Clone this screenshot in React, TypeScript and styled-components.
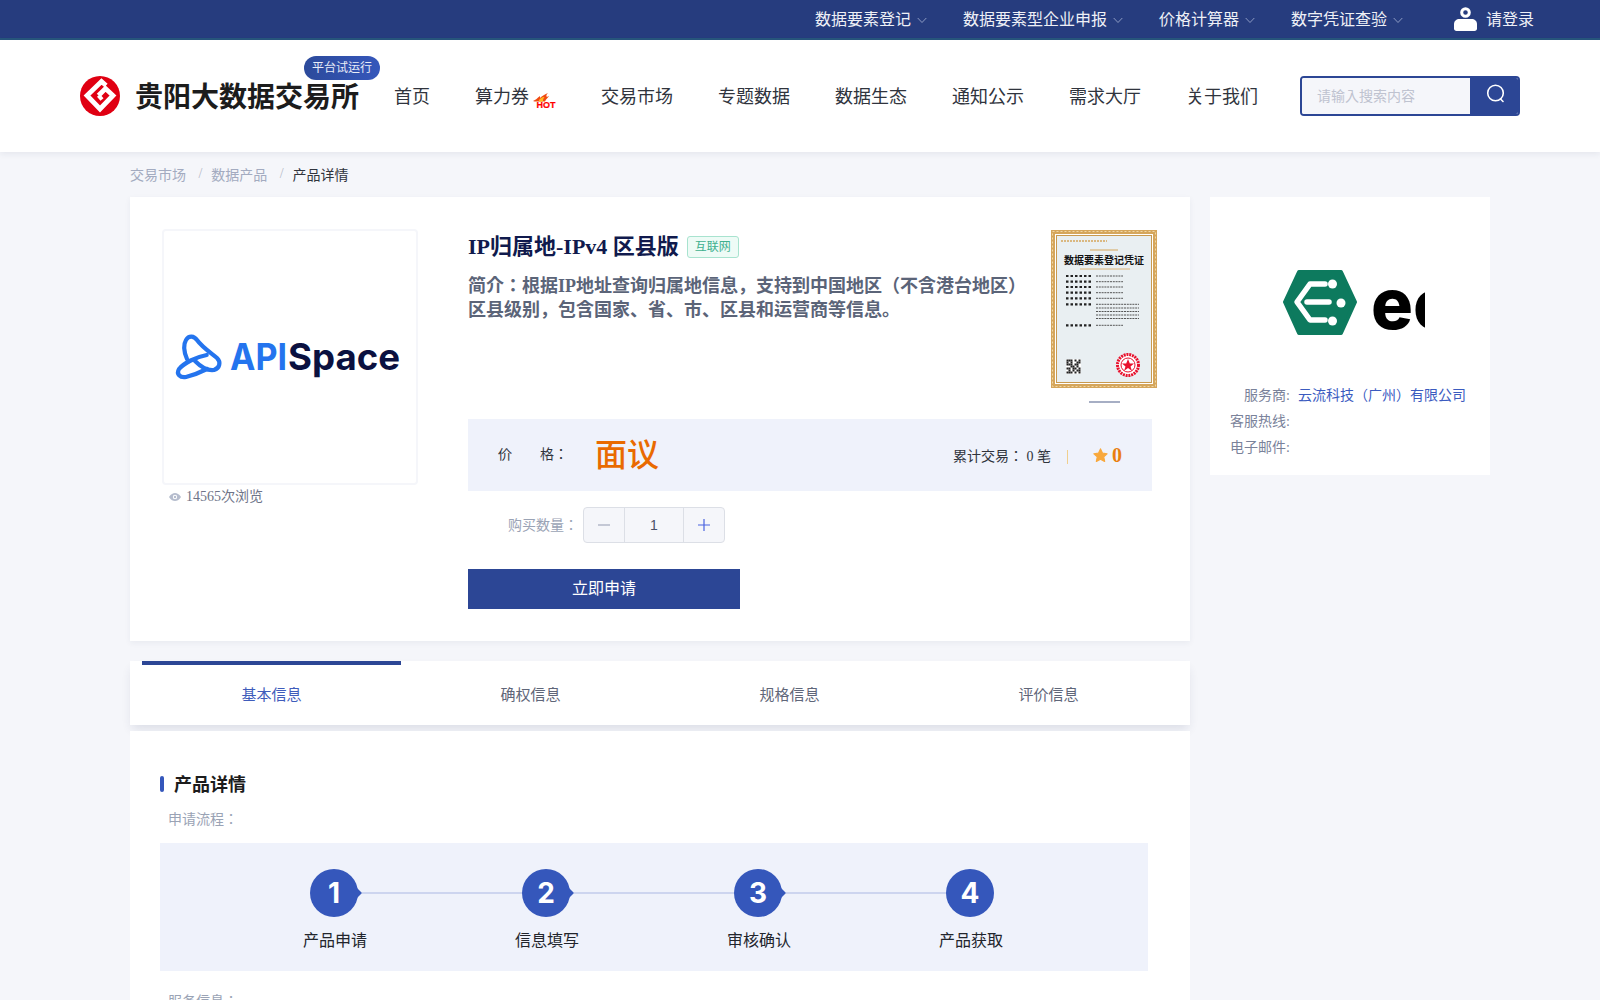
import React from "react";
import styled, { createGlobalStyle } from "styled-components";

const topLinks = ["数据要素登记", "数据要素型企业申报", "价格计算器", "数字凭证查验"];
const navLinks = ["首页", "算力券", "交易市场", "专题数据", "数据生态", "通知公示", "需求大厅", "关于我们"];
const tabs = ["基本信息", "确权信息", "规格信息", "评价信息"];
const steps = ["产品申请", "信息填写", "审核确认", "产品获取"];
const certRows = [46, 51.7, 57, 62.7, 68.3, 74.3, 95.3];
const certLines = [78, 81.5, 85, 88.5];
const qrCells = [
    "1110101", "1010011", "1110110", "0011010", "1101101", "0101011", "1110101",
];

const GlobalStyle = createGlobalStyle`
  html, body {
    margin: 0;
    padding: 0;
    background: #f5f6fa;
    font-family: "Liberation Serif", "Noto Sans CJK JP", serif;
  }
`;

function Chevron() {
    return (
        <ChevronIcon viewBox="0 0 10 7" fill="none" stroke="#8d9ac2" strokeWidth="1">
            <path d="M.7 1l4.300 4.500L9.300 1" />
        </ChevronIcon>
    );
}

function UserIcon() {
    return (
        <svg width="23" height="24" viewBox="0 0 23 24">
            <circle cx="11.5" cy="5.5" r="3.8" fill="none" stroke="#fff" strokeWidth="3" />
            <path d="M0 17c0-3 2.5-5 5.5-5h12c3 0 5.5 2 5.5 5v4.500c0 1.500-1 2.500-2.500 2.500h-18C1 24 0 23 0 21.500z" fill="#fff" />
        </svg>
    );
}

function GuiyangLogo() {
    return (
        <svg width="40" height="40" viewBox="0 0 40 40">
            <circle cx="20" cy="20" r="20" fill="#e00012" />
            <path
                d="M26 9.500L21.500 5.500L7 19.500L20 33L33 19.500L25.500 12.500L18.500 19.500"
                fill="none"
                stroke="#fff"
                strokeWidth="4.800"
                strokeLinejoin="miter"
            />
            <path d="M18.500 19.500L22 23.500" fill="none" stroke="#fff" strokeWidth="4" />
        </svg>
    );
}

function HotIcon() {
    return (
        <svg width="25" height="18" viewBox="0 0 25 18">
            <path d="M2 8C5 7 6 5 9 3C9 4 9 5 9 5C11 3 14 1 17 0C15 2 15 3 16 4C17 3 18 3 18 3C17 5 15 6 14 8.500H5C4 8.500 3 8.500 2 8Z" fill="#f04a12" />
            <path d="M8 7C10 4.500 12 4 13.500 4C12 6 12 7 12 8.500H8Z" fill="#ffb81f" />
            <HotText x="5.500" y="14.500">HOT</HotText>
        </svg>
    );
}

function SearchIcon() {
    return (
        <svg width="20" height="20" viewBox="0 0 20 20" fill="none" stroke="#fff" strokeWidth="1.600">
            <circle cx="9.500" cy="9" r="7.800" />
            <path d="M14.500 15l2.500 2.500" strokeLinecap="round" />
        </svg>
    );
}

function ApiSpaceLogo() {
    return (
        <svg width="252" height="60" viewBox="0 0 252 60">
            <g fill="none" stroke="#2474ee" strokeWidth="4.200" strokeLinecap="round">
                <path d="M23 27C20 20 19 13 22 8C25 3 30 4 33 8C38 15 47 21 53 26C57 30 56 36 50 38C43 39 36 34 31 29" />
                <path d="M42.700 23C32 25 20 31 15 37C12 42 16 46 22 45C30 43 37 40 43 37" />
            </g>
            <ApiWord x="66" y="38" textLength="57" lengthAdjust="spacingAndGlyphs">API</ApiWord>
            <SpaceWord x="124" y="38" textLength="112" lengthAdjust="spacingAndGlyphs">Space</SpaceWord>
        </svg>
    );
}

function EcoLogo() {
    return (
        <svg width="142" height="66" viewBox="0 0 142 66">
            <path d="M16 2H58L72 32L58 63H16L2 32Z" fill="#0d7a5e" stroke="#0d7a5e" strokeWidth="4" strokeLinejoin="round" />
            <g fill="none" stroke="#fff" strokeWidth="5.500" strokeLinecap="round" strokeLinejoin="round">
                <path d="M42 14H27L14 32L27 50H42" />
                <path d="M24 32H46" />
            </g>
            <g fill="#fff">
                <circle cx="49.500" cy="14" r="4.500" />
                <circle cx="58" cy="33" r="4.500" />
                <circle cx="49.500" cy="51" r="4.500" />
            </g>
            <EcoWord x="88" y="59">ec</EcoWord>
        </svg>
    );
}

function Certificate() {
    return (
        <svg width="106" height="158" viewBox="0 0 106 158">
            <rect width="106" height="158" fill="#d5a65c" />
            <rect x="1.500" y="1.500" width="103" height="155" fill="none" stroke="#f0d9a8" strokeWidth="1" strokeDasharray="2 2" />
            <rect x="4" y="4" width="98" height="150" fill="#fff" />
            <rect x="5.500" y="5.500" width="95" height="147" fill="#e9eff2" stroke="#c99a4f" strokeWidth="1" />
            <path d="M10 11H56" stroke="#d5a65c" strokeWidth="1.500" strokeDasharray="2 1" />
            <path d="M39 20H67" stroke="#d5a65c" strokeWidth="1" />
            <CertTitle x="53" y="34" textAnchor="middle">数据要素登记凭证</CertTitle>
            <path d="M29 39H79" stroke="#d5a65c" strokeWidth="0.800" />
            {certRows.map((y) => (
                <g key={y}>
                    <path d={`M15 ${y}H42`} stroke="#222" strokeWidth="2.200" strokeDasharray="2.500 2" />
                    <path d={`M45 ${y}H${y === 74.3 ? 88 : 72}`} stroke="#555" strokeWidth="1" strokeDasharray="2 0.800" />
                </g>
            ))}
            {certLines.map((y) => (
                <path key={y} d={`M45 ${y}H88`} stroke="#555" strokeWidth="1" strokeDasharray="2 0.800" />
            ))}
            <rect x="15" y="129" width="15" height="15" fill="#fff" />
            {qrCells.map((row, r) =>
                row.split("").map((cell, c) =>
                    cell === "1" ? <rect key={`${r}-${c}`} x={15.500 + c * 2} y={129.500 + r * 2} width="2" height="2" fill="#222" /> : null
                )
            )}
            <circle cx="77" cy="135" r="10.500" fill="#fff" stroke="#e8112d" strokeWidth="3" strokeDasharray="2 0.800" />
            <circle cx="77" cy="135" r="7" fill="none" stroke="#e8112d" strokeWidth="1" />
            <polygon points="77,129 78.800,133.500 83,133.500 79.500,136.500 81,141 77,138 73,141 74.500,136.500 71,133.500 75.200,133.500" fill="#e8112d" />
        </svg>
    );
}

function EyeIcon() {
    return (
        <svg width="12" height="8" viewBox="0 0 12 8">
            <path d="M0 4C2 1 4 0 6 0s4 1 6 4c-2 3-4 4-6 4S2 7 0 4z" fill="#b5bccd" />
            <circle cx="6" cy="4" r="2.200" fill="#fff" />
            <circle cx="6" cy="4" r="1.200" fill="#b5bccd" />
        </svg>
    );
}

function StarIcon() {
    return (
        <svg width="15" height="15" viewBox="0 0 24 24">
            <path
                d="M12 1.500l3.200 6.800 7.300.9-5.400 5 1.500 7.300L12 17.900l-6.600 3.600 1.500-7.300-5.400-5 7.300-.9z"
                fill="#f8a83c"
                stroke="#f8a83c"
                strokeWidth="2"
                strokeLinejoin="round"
            />
        </svg>
    );
}

export default function App() {
    return (
        <Page>
            <GlobalStyle />
            <TopBar>
                {topLinks.map((link) => (
                    <TopLink key={link}>
                        <TopText>{link}</TopText>
                        <Chevron />
                    </TopLink>
                ))}
                <LoginLink>
                    <UserIcon />
                    <TopText>请登录</TopText>
                </LoginLink>
            </TopBar>

            <Header>
                <LogoBlock>
                    <GuiyangLogo />
                    <SiteName>贵阳大数据交易所</SiteName>
                    <TrialBadge>平台试运行</TrialBadge>
                </LogoBlock>
                <Nav>
                    {navLinks.map((link) => (
                        <NavLink key={link}>
                            {link}
                            {link === "算力券" && <HotIcon />}
                        </NavLink>
                    ))}
                </Nav>
                <SearchBox>
                    <SearchField>请输入搜索内容</SearchField>
                    <SearchButton>
                        <SearchIcon />
                    </SearchButton>
                </SearchBox>
            </Header>

            <Breadcrumb>
                <CrumbLink>交易市场</CrumbLink>
                <CrumbSeparator>/</CrumbSeparator>
                <CrumbLink>数据产品</CrumbLink>
                <CrumbSeparator>/</CrumbSeparator>
                <CrumbCurrent>产品详情</CrumbCurrent>
            </Breadcrumb>

            <Content>
                <MainColumn>
                    <ProductCard>
                        <div>
                            <ProductImage>
                                <ApiSpaceLogo />
                            </ProductImage>
                            <Views>
                                <EyeIcon />
                                14565次浏览
                            </Views>
                        </div>
                        <ProductInfo>
                            <InfoTop>
                                <InfoText>
                                    <TitleRow>
                                        <Title>IP归属地-IPv4 区县版</Title>
                                        <Tag>互联网</Tag>
                                    </TitleRow>
                                    <Summary>
                                        简介：根据IP地址查询归属地信息，支持到中国地区（不含港台地区）区县级别，包含国家、省、市、区县和运营商等信息。
                                    </Summary>
                                </InfoText>
                                <CertBlock>
                                    <Certificate />
                                    <CertMark />
                                </CertBlock>
                            </InfoTop>
                            <PriceBar>
                                <PriceLabel>价 格：</PriceLabel>
                                <PriceValue>面议</PriceValue>
                                <Stats>
                                    累计交易： 0 笔
                                    <StatDivider />
                                    <StarIcon />
                                    <Score>0</Score>
                                </Stats>
                            </PriceBar>
                            <QuantityRow>
                                <QuantityLabel>购买数量：</QuantityLabel>
                                <Stepper>
                                    <StepButton>
                                        <svg width="12" height="12" viewBox="0 0 12 12" stroke="#a4abbd" strokeWidth="1.200">
                                            <path d="M0 6h12" />
                                        </svg>
                                    </StepButton>
                                    <StepValue>1</StepValue>
                                    <StepButton>
                                        <svg width="12" height="12" viewBox="0 0 12 12" stroke="#4a63e0" strokeWidth="1.200">
                                            <path d="M0 6h12M6 0v12" />
                                        </svg>
                                    </StepButton>
                                </Stepper>
                            </QuantityRow>
                            <ApplyButton>立即申请</ApplyButton>
                        </ProductInfo>
                    </ProductCard>

                    <TabsCard>
                        {tabs.map((tab, i) => (
                            <Tab key={tab} $active={i === 0}>
                                {tab}
                            </Tab>
                        ))}
                    </TabsCard>

                    <DetailCard>
                        <SectionTitle>产品详情</SectionTitle>
                        <FieldLabel>申请流程：</FieldLabel>
                        <StepsPanel>
                            {steps.map((step, i) => (
                                <Step key={step} $last={i === steps.length - 1}>
                                    <StepCircle $last={i === steps.length - 1}>{i + 1}</StepCircle>
                                    <StepName>{step}</StepName>
                                </Step>
                            ))}
                        </StepsPanel>
                        <ServiceLabel>服务信息：</ServiceLabel>
                    </DetailCard>
                </MainColumn>

                <SideCard>
                    <SideLogo>
                        <EcoLogo />
                    </SideLogo>
                    <SideRow>
                        <SideLabel>服务商:</SideLabel>
                        <SideValue>云流科技（广州）有限公司</SideValue>
                    </SideRow>
                    <SideRow>
                        <SideLabel>客服热线:</SideLabel>
                    </SideRow>
                    <SideRow>
                        <SideLabel>电子邮件:</SideLabel>
                    </SideRow>
                </SideCard>
            </Content>
        </Page>
    );
}

const Page = styled.div`
  height: 100vh;
  overflow: hidden;
  background: #f5f6fa;
`;

const TopBar = styled.div`
  display: flex;
  align-items: center;
  justify-content: flex-end;
  gap: 36px;
  height: 38px;
  padding-right: 66px;
  background: #263c7e;
  border-bottom: 2px solid #27567c;
  color: #eef0f6;
  font-size: 16px;
`;

const TopLink = styled.div`
  display: flex;
  align-items: center;
  gap: 6px;
`;

const TopText = styled.span`
  margin-bottom: 2px;
`;

const ChevronIcon = styled.svg`
  width: 10px;
  height: 7px;
  margin-top: 2px;
`;

const LoginLink = styled.div`
  display: flex;
  align-items: center;
  gap: 9px;
  margin-left: 15px;
`;

const Header = styled.header`
  position: relative;
  display: flex;
  align-items: center;
  height: 112px;
  padding-left: 80px;
  background: #fff;
  box-shadow: 0 2px 6px rgba(40, 50, 90, 0.08);
`;

const LogoBlock = styled.div`
  position: relative;
  display: flex;
  align-items: center;
  gap: 15px;
`;

const SiteName = styled.div`
  margin-top: 4px;
  color: #1c1c1c;
  font-size: 28px;
  font-weight: 700;
  line-height: 40px;
`;

const TrialBadge = styled.div`
  position: absolute;
  top: -18px;
  right: -21px;
  height: 24px;
  padding: 0 8px;
  border-radius: 12px;
  background: linear-gradient(90deg, #2c4a9b, #3557bb);
  color: #e9edf8;
  font-size: 12px;
  line-height: 24px;
`;

const Nav = styled.nav`
  display: flex;
  gap: 45px;
  margin-left: 35px;
  padding-top: 2px;
`;

const NavLink = styled.div`
  display: flex;
  align-items: center;
  gap: 2px;
  color: #30343d;
  font-size: 18px;
  line-height: 26px;

  svg {
    margin-top: 9px;
  }
`;

const HotText = styled.text`
  fill: #f00;
  font-family: "Liberation Sans", sans-serif;
  font-size: 9px;
  font-weight: 700;
  stroke: #f00;
  stroke-width: 0.2px;
`;

const SearchBox = styled.div`
  display: flex;
  width: 220px;
  height: 40px;
  margin-left: 42px;
  box-sizing: border-box;
  border: 2px solid #2c4695;
  border-radius: 4px;
  overflow: hidden;
`;

const SearchField = styled.div`
  flex: 1;
  padding-left: 15px;
  background: #f5f6fa;
  color: #bfc3d0;
  font-size: 14px;
  line-height: 38px;
`;

const SearchButton = styled.div`
  display: flex;
  align-items: flex-start;
  justify-content: center;
  width: 48px;
  padding: 6px 0 0 4px;
  box-sizing: border-box;
  background: #2c4695;
`;

const Breadcrumb = styled.div`
  display: flex;
  align-items: center;
  box-sizing: border-box;
  height: 45px;
  padding: 0 0 2px 130px;
  font-size: 14px;
`;

const CrumbLink = styled.span`
  color: #a3abc0;
`;

const CrumbSeparator = styled.span`
  margin: 0 9px 0 12.4px;
  color: #b5bac8;
`;

const CrumbCurrent = styled.span`
  color: #30343d;
`;

const Content = styled.div`
  display: flex;
  align-items: flex-start;
  gap: 20px;
  padding-left: 130px;
`;

const MainColumn = styled.div`
  width: 1060px;
`;

const ProductCard = styled.section`
  display: flex;
  gap: 50px;
  padding: 32px;
  background: #fff;
  box-shadow: 0 2px 6px rgba(40, 50, 90, 0.06);
`;

const ProductImage = styled.div`
  display: flex;
  align-items: center;
  justify-content: center;
  width: 252px;
  height: 252px;
  border: 2px solid #f5f6fa;
  border-radius: 4px;

  svg {
    margin-top: 10px;
  }
`;

const ApiWord = styled.text`
  fill: #2474ee;
  font-family: Inter, sans-serif;
  font-size: 37px;
  font-weight: 700;
`;

const SpaceWord = styled(ApiWord)`
  fill: #0b1140;
`;

const Views = styled.div`
  display: flex;
  align-items: center;
  gap: 5px;
  padding-left: 7px;
  margin-top: 2px;
  color: #6e7488;
  font-size: 14px;
  line-height: 20px;
`;

const ProductInfo = styled.div`
  width: 690px;
`;

const InfoTop = styled.div`
  display: flex;
  justify-content: space-between;
  height: 190px;
`;

const InfoText = styled.div`
  width: 570px;
`;

const TitleRow = styled.div`
  display: flex;
  align-items: center;
  gap: 8px;
  height: 36px;
`;

const Title = styled.h1`
  margin: 0 0 6px;
  color: #101a4d;
  font-size: 22px;
  font-weight: 700;
`;

const Tag = styled.span`
  box-sizing: border-box;
  width: 52px;
  height: 22px;
  border: 1px solid #a8e3cf;
  border-radius: 3px;
  background: #eefbf6;
  color: #3eb08e;
  font-size: 12px;
  line-height: 20px;
  text-align: center;
`;

const Summary = styled.p`
  margin: 9px 0 0;
  color: #5b6478;
  font-size: 18px;
  font-weight: 700;
  line-height: 24px;
`;

const CertBlock = styled.div`
  display: flex;
  flex-direction: column;
  align-items: center;
  margin-top: 1px;
  margin-right: 1px;
`;

const CertMark = styled.div`
  width: 31px;
  height: 2px;
  margin-top: 13px;
  background: #a6aec4;
`;

const CertTitle = styled.text`
  fill: #111;
  font-family: "Noto Sans CJK JP", sans-serif;
  font-size: 10px;
  font-weight: 700;
`;

const PriceBar = styled.div`
  display: flex;
  align-items: center;
  width: 684px;
  height: 72px;
  box-sizing: border-box;
  padding: 0 30px;
  background: #eff2fb;
`;

const PriceLabel = styled.span`
  width: 70px;
  margin-bottom: 4px;
  color: #30343d;
  font-size: 14px;
  word-spacing: 24.5px;
`;

const PriceValue = styled.span`
  margin: -6px 0 0 27px;
  color: #e96a00;
  font-size: 32px;
  font-weight: 500;
`;

const Stats = styled.div`
  display: flex;
  align-items: center;
  margin-left: auto;
  color: #30343d;
  font-size: 14px;
  white-space: pre;
`;

const StatDivider = styled.span`
  width: 1px;
  height: 14px;
  margin: 3px 25px 0 16px;
  background: #f0cf8e;
`;

const Score = styled.span`
  margin-left: 4px;
  color: #e97f10;
  font-size: 20px;
  font-weight: 700;
`;

const QuantityRow = styled.div`
  display: flex;
  align-items: center;
  margin-top: 16px;
  padding-left: 40px;
`;

const QuantityLabel = styled.span`
  width: 75px;
  margin-bottom: 2px;
  color: #9aa3b5;
  font-size: 14px;
`;

const Stepper = styled.div`
  display: flex;
  width: 142px;
  height: 36px;
  box-sizing: border-box;
  border: 1px solid #dcdfe6;
  border-radius: 4px;
  background: #f5f6fa;
`;

const StepButton = styled.div`
  display: flex;
  align-items: center;
  justify-content: center;
  width: 40px;
`;

const StepValue = styled.div`
  flex: 1;
  border-left: 1px solid #dcdfe6;
  border-right: 1px solid #dcdfe6;
  color: #4a5068;
  font-family: "Liberation Sans", sans-serif;
  font-size: 14px;
  line-height: 34px;
  text-align: center;
`;

const ApplyButton = styled.div`
  width: 272px;
  height: 40px;
  margin-top: 26px;
  background: #2c4695;
  color: #fff;
  font-size: 16px;
  line-height: 40px;
  text-align: center;
`;

const TabsCard = styled.div`
  display: flex;
  height: 64px;
  margin-top: 20px;
  padding: 0 12px;
  background: #fff;
  box-shadow: 0 6px 10px -2px rgba(40, 50, 90, 0.12);
`;

const Tab = styled.div<{ $active: boolean }>`
  flex: 1;
  box-sizing: border-box;
  border-top: 4px solid ${(p) => (p.$active ? "#2c4695" : "transparent")};
  color: ${(p) => (p.$active ? "#3f5cbb" : "#5f6679")};
  font-size: 15px;
  line-height: 60px;
  text-align: center;
`;

const DetailCard = styled.section`
  margin-top: 6px;
  padding: 41px 42px 30px 30px;
  background: #fff;
`;

const SectionTitle = styled.h2`
  position: relative;
  margin: 0 0 11px;
  padding-left: 14px;
  color: #1c1c1c;
  font-size: 18px;
  font-weight: 700;
  line-height: 26px;

  &::before {
    content: "";
    position: absolute;
    top: 4px;
    left: 0;
    width: 4px;
    height: 16px;
    border-radius: 2px;
    background: #3557bb;
  }
`;

const FieldLabel = styled.div`
  padding-left: 8px;
  color: #9aa3b5;
  font-size: 14px;
  line-height: 22px;
`;

const ServiceLabel = styled(FieldLabel)`
  margin-top: 20px;
`;

const StepsPanel = styled.div`
  display: flex;
  height: 128px;
  box-sizing: border-box;
  margin-top: 12px;
  padding: 26px 0 0 68px;
  background: #eff2fb;
`;

const Step = styled.div<{ $last: boolean }>`
  position: relative;
  display: flex;
  flex-direction: column;
  align-items: center;
  width: 212px;

  &::after {
    content: "";
    display: ${(p) => (p.$last ? "none" : "block")};
    position: absolute;
    top: 23px;
    left: 134px;
    width: 164px;
    height: 2px;
    background: #cdd5ef;
  }
`;

const StepCircle = styled.div<{ $last: boolean }>`
  position: relative;
  width: 48px;
  height: 48px;
  border-radius: 50%;
  background: #3557bb;
  color: #fff;
  font-family: Inter, sans-serif;
  font-size: 28px;
  font-weight: 700;
  line-height: 48px;
  text-align: center;

  &::after {
    content: "";
    display: ${(p) => (p.$last ? "none" : "block")};
    position: absolute;
    top: 18px;
    right: -4px;
    border-top: 6px solid transparent;
    border-bottom: 6px solid transparent;
    border-left: 6px solid #3557bb;
  }
`;

const StepName = styled.div`
  margin-top: 12px;
  padding-left: 2px;
  color: #22252c;
  font-size: 16px;
  line-height: 24px;
`;

const SideCard = styled.aside`
  width: 280px;
  height: 278px;
  box-sizing: border-box;
  padding-top: 73px;
  background: #fff;
`;

const SideLogo = styled.div`
  height: 113px;
  padding-left: 73px;
`;

const SideRow = styled.div`
  display: flex;
  font-size: 14px;
  line-height: 26px;
`;

const SideLabel = styled.span`
  width: 80px;
  color: #7a829a;
  text-align: right;
`;

const SideValue = styled.span`
  margin-left: 8px;
  color: #3b5bbf;
`;

const EcoWord = styled.text`
  fill: #000;
  font-family: Inter, sans-serif;
  font-size: 70px;
  font-weight: 800;
`;
